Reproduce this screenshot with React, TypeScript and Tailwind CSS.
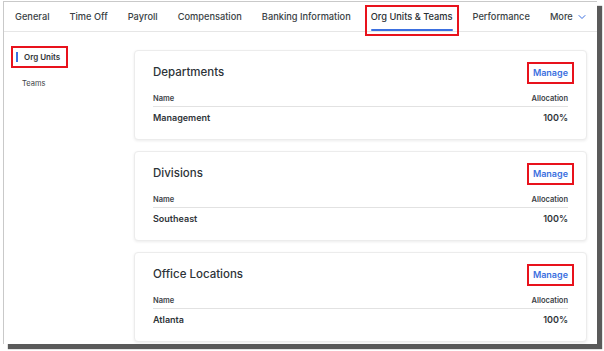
import { ChevronDown } from "lucide-react";

const tabs = [
  "General",
  "Time Off",
  "Payroll",
  "Compensation",
  "Banking Information",
  "Org Units & Teams",
  "Performance",
];

const cards = [
  { title: "Departments", row: "Management" },
  { title: "Divisions", row: "Southeast" },
  { title: "Office Locations", row: "Atlanta" },
];

function OrgCard({ title, row }: { title: string; row: string }) {
  return (
    <div className="bg-white rounded border border-[#ececec] shadow-[0_1px_3px_rgba(0,0,0,0.08)] px-[18px] pt-[11px] h-[90px]">
      <div className="flex items-center justify-between h-[22px]">
        <span className="text-[11.5px] font-medium text-[#2d3338]">{title}</span>
        <span className="border-2 border-[#e8121c] px-[4px] py-[2px] -mr-[6px] text-[9px] font-semibold text-[#3b6fe0]">
          Manage
        </span>
      </div>
      <div className="flex justify-between mt-[9px] pb-[2px] border-b border-[#e2e2e2] text-[7.5px] font-semibold text-[#3c4247]">
        <span>Name</span>
        <span>Allocation</span>
      </div>
      <div className="flex justify-between mt-[4px] text-[9px] font-semibold text-[#2f3539]">
        <span>{row}</span>
        <span>100%</span>
      </div>
    </div>
  );
}

export default function App() {
  return (
    <div className="w-[604px] h-[351px] bg-white overflow-hidden" style={{ fontFamily: "Inter, 'Liberation Sans', Arial, sans-serif" }}>
      <div className="ml-[3px] mt-[1px] w-[594px] h-[343px] border-l border-t border-[#c9c9c9] bg-white shadow-[5px_5px_1px_#5a5a5a] flex flex-col">
        <div className="flex items-center h-[30px] border-b border-[#e6e6e6] pl-[1px] text-[9.25px] font-medium text-[#3a3f44] whitespace-nowrap">
          {tabs.map((t) => {
            const active = t === "Org Units & Teams";
            return active ? (
              <div key={t} className="mx-[10px] h-[30px] flex items-center relative">
                <span className="text-[#2a2f33]">{t}</span>
                <span className="absolute left-0 right-0 bottom-[1px] h-[2px] bg-[#3b6fe0] rounded" />
                <span className="absolute -left-[6px] -right-[6px] top-[3px] h-[31px] border-2 border-[#e8121c] z-10" />
              </div>
            ) : (
              <div key={t} className="px-[10px]">{t}</div>
            );
          })}
          <div className="flex items-center gap-[3px] px-[10px]">
            More
            <ChevronDown className="w-[12px] h-[12px] text-[#3b6fe0]" strokeWidth={2} />
          </div>
        </div>
        <div className="flex flex-1">
          <div className="w-[130px] pt-[12px] pl-[7px]">
            <div className="inline-flex items-center border-2 border-[#e8121c] px-[3px] h-[22px] w-[57px] text-[8px] font-semibold text-[#2f3539] whitespace-nowrap">
              <span className="w-[2px] h-[10px] bg-[#3b6fe0] mr-[6px]" />
              Org Units
            </div>
            <div className="mt-[10px] pl-[11px] text-[7.5px] text-[#3c4247]">Teams</div>
          </div>
          <div className="w-[453px] pt-[18px] flex flex-col gap-[11px]">
            {cards.map((c) => (
              <OrgCard key={c.title} {...c} />
            ))}
          </div>
        </div>
      </div>
    </div>
  );
}
